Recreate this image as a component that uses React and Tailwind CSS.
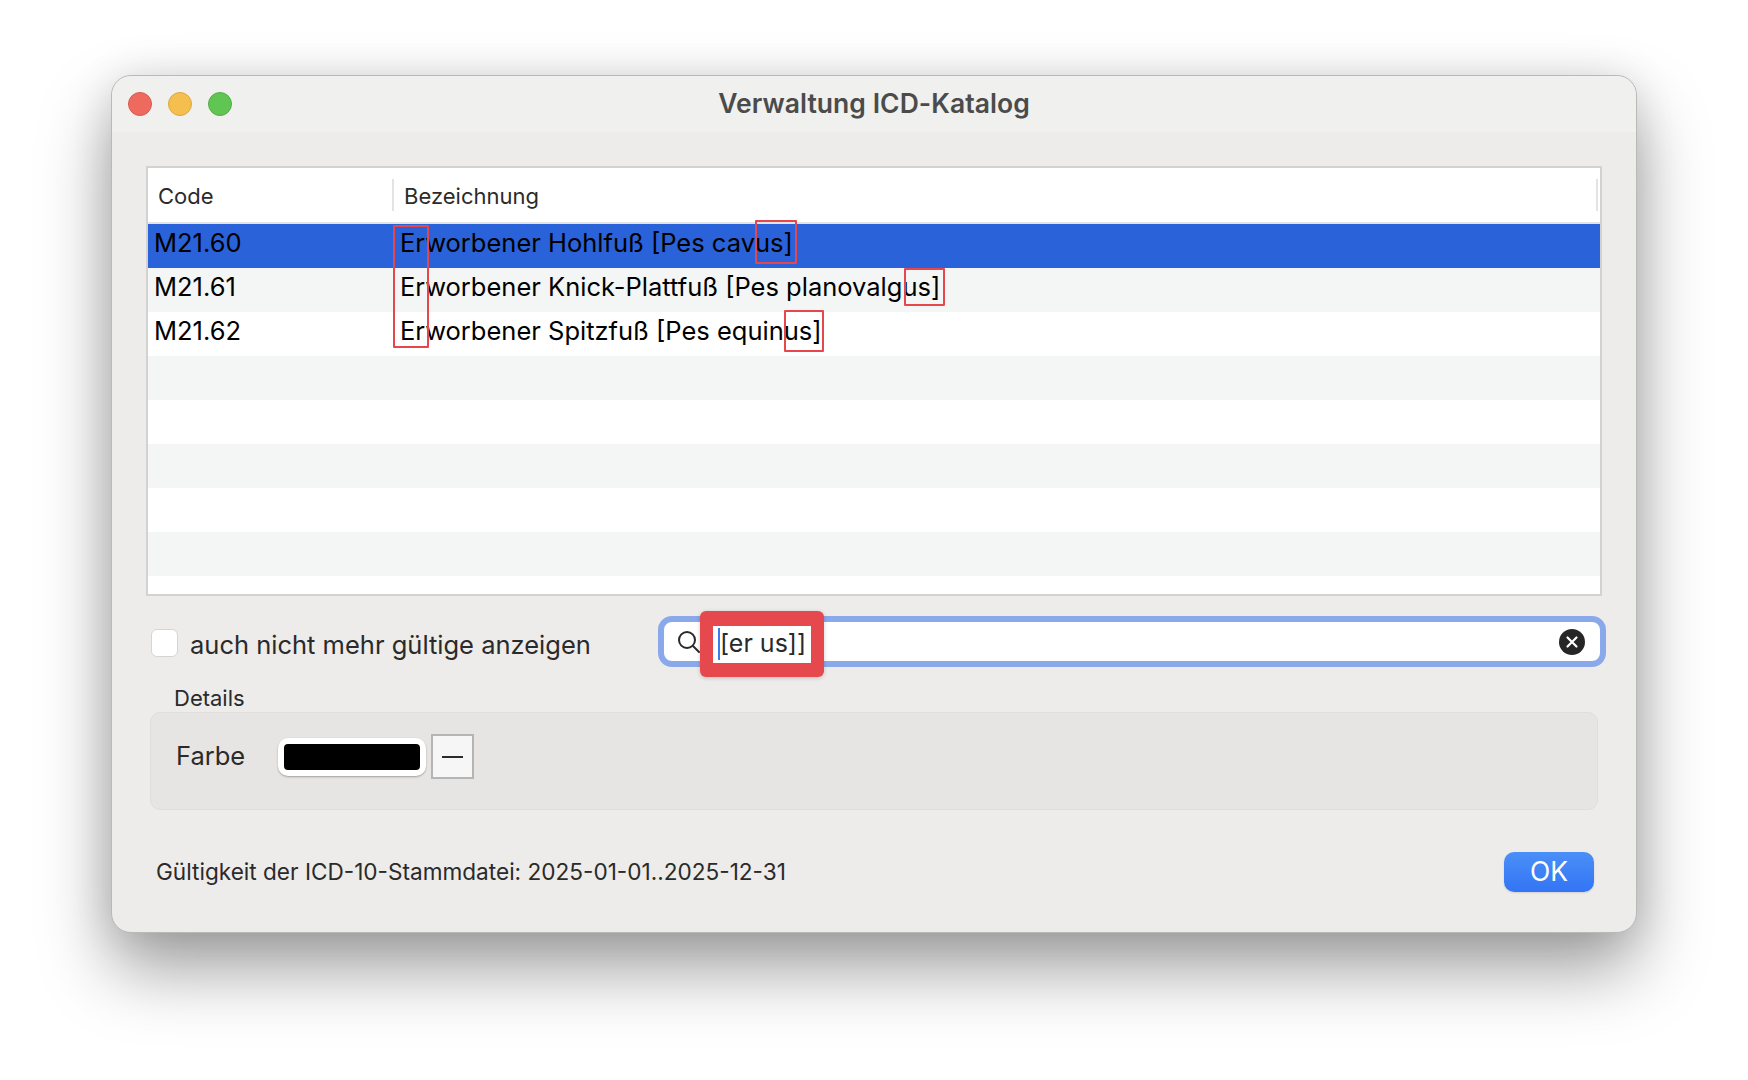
import React from 'react';

const font = "[font-family:Inter,'Noto_Sans',sans-serif]";

const rows = [
  { code: 'M21.60', name: 'Erworbener Hohlfuß [Pes cavus]' },
  { code: 'M21.61', name: 'Erworbener Knick-Plattfuß [Pes planovalgus]' },
  { code: 'M21.62', name: 'Erworbener Spitzfuß [Pes equinus]' },
  {}, {}, {}, {}, {}, {},
];

const rowColor = (i) => {
  if (i === 0) return 'bg-[#2a62d9]';
  return i % 2 === 1 ? 'bg-[#f4f5f5]' : 'bg-white';
};

const marks = [
  'left-[281px] top-[149px] w-[36px] h-[123px]',
  'left-[643px] top-[144px] w-[42px] h-[44px]',
  'left-[792px] top-[192px] w-[41px] h-[38px]',
  'left-[672px] top-[234px] w-[40px] h-[42px]',
];

const App = () => {
  return (
    <div className={`${font} w-full h-[1080px] overflow-hidden bg-white pt-[75px] pl-[111px]`}>
      <div className="relative w-[1526px] h-[858px] rounded-[20px] overflow-visible border border-[#b9b9b8] bg-[#edecea] shadow-[0_36px_70px_rgba(0,0,0,0.38),0_0_40px_rgba(0,0,0,0.1)] flex flex-col">
        <div className="h-[56px] shrink-0 rounded-t-[20px] bg-[#f0f0ee] flex items-center justify-center relative">
          <div className="absolute left-[16px] top-[16px] flex gap-[16px]">
            <span className="w-6 h-6 rounded-full bg-[#ee6a5f] border border-[#d9594f]" />
            <span className="w-6 h-6 rounded-full bg-[#f5bf4f] border border-[#dfa63c]" />
            <span className="w-6 h-6 rounded-full bg-[#61c554] border border-[#52ad46]" />
          </div>
          <span className="text-[26.5px] font-semibold text-[#4b4b4b] tracking-[0.05px]">Verwaltung ICD-Katalog</span>
        </div>

        <div className="flex-1 px-[34px] pt-[34px] flex flex-col">
          <div className="h-[430px] shrink-0 border-2 border-[#d2d2d1] bg-white overflow-hidden flex flex-col">
            <div className="h-[54px] shrink-0 flex items-center text-[22px] text-[#2b2b2b]">
              <div className="w-[244px] pl-[10px] pt-[2px] shrink-0">Code</div>
              <div className="flex-1 h-[32px] border-l-2 border-[#e3e3e3] pl-[10px] pt-[2px] flex items-center">Bezeichnung</div>
              <div className="w-[2px] h-[32px] mr-[2px] bg-[#e3e3e3]" />
            </div>
            <div className="h-[2px] shrink-0 bg-[#e3e3e3]" />
            {rows.map((row, i) => (
              <div key={i} className={`h-[44px] shrink-0 flex items-center pb-[6px] text-[25.5px] text-black ${rowColor(i)}`}>
                <div className="w-[245px] pl-[6px] shrink-0">{row.code}</div>
                <div className="pl-[7px]">{row.name}</div>
              </div>
            ))}
          </div>

          <div className="mt-[20px] h-[51px] flex items-center pl-[5px] -mr-[4px]">
            <span className="w-[27px] h-[28px] mt-[3px] shrink-0 rounded-[6px] bg-white border border-[#d5d5d4]" />
            <span className="ml-[12px] mt-[7px] text-[25.5px] text-[#2a2a2a]">auch nicht mehr gültige anzeigen</span>
            <div className="ml-auto w-[948px] h-[51px] rounded-[14px] border-[6px] border-[#8aa9ea] bg-white flex items-center justify-between pl-[11px] pr-[15px]">
              <svg width="26" height="26" viewBox="0 0 26 26" fill="none" stroke="#2a2a2a" strokeWidth="2" strokeLinecap="round">
                <circle cx="12" cy="11" r="8" />
                <line x1="18" y1="17" x2="24" y2="23" />
              </svg>
              <svg width="26" height="26" viewBox="0 0 26 26">
                <circle cx="13" cy="13" r="13" fill="#262626" />
                <path d="M8.5 8.5 17.5 17.5M17.5 8.5 8.5 17.5" stroke="#fff" strokeWidth="2.2" strokeLinecap="round" />
              </svg>
            </div>
          </div>

          <div className="mt-[19px] pl-[28px] h-[25px] flex items-center text-[22px] text-[#2a2a2a]">Details</div>
          <div className="mt-[1px] mx-[4px] h-[98px] rounded-[10px] bg-[#e6e5e4] border border-[#dfdedd] flex items-center pl-[25px] pb-[9px]">
            <span className="w-[102px] text-[25.5px] text-[#2a2a2a]">Farbe</span>
            <span className="w-[148px] h-[38px] rounded-[10px] bg-white shadow-[0_1px_2px_rgba(0,0,0,0.3)] flex items-center justify-center">
              <span className="w-[136px] h-[26px] rounded-[4px] bg-black" />
            </span>
            <span className="ml-[5px] w-[43px] h-[45px] border-2 border-[#b5b5b5] bg-[#f6f6f6] flex items-center justify-center">
              <span className="w-[21px] h-[2px] bg-[#2a2a2a]" />
            </span>
          </div>

          <div className="mt-[42px] flex items-center justify-between pl-[10px] pr-[8px]">
            <span className="text-[22.6px] text-[#2a2a2a]">Gültigkeit der ICD-10-Stammdatei: 2025-01-01..2025-12-31</span>
            <span className="w-[90px] h-[40px] rounded-[10px] bg-gradient-to-b from-[#4b8ff8] to-[#3374f4] text-white text-[26.5px] flex items-center justify-center shadow-[0_1px_2px_rgba(0,0,0,0.12)]">OK</span>
          </div>
        </div>

        {marks.map((m) => (
          <div key={m} className={`absolute ${m} border-2 border-[#e5474c] rounded-[1px]`} />
        ))}

        {/* red callout on the search field */}
        <div className="absolute left-[588px] top-[535px] w-[124px] h-[66px] rounded-[6px] bg-[#e5484d] shadow-[0_1px_4px_rgba(0,0,0,0.2)] flex items-center justify-center">
          <div className="relative w-[98px] h-[37px] bg-white flex items-center pl-[7px] text-[25px] text-[#2a2a2a]">
            <span className="absolute left-[5px] top-[2px] w-[2px] h-[32px] bg-[#3b7cf0]" />
            [er us]]
          </div>
        </div>
      </div>
    </div>
  );
};

export default App;
